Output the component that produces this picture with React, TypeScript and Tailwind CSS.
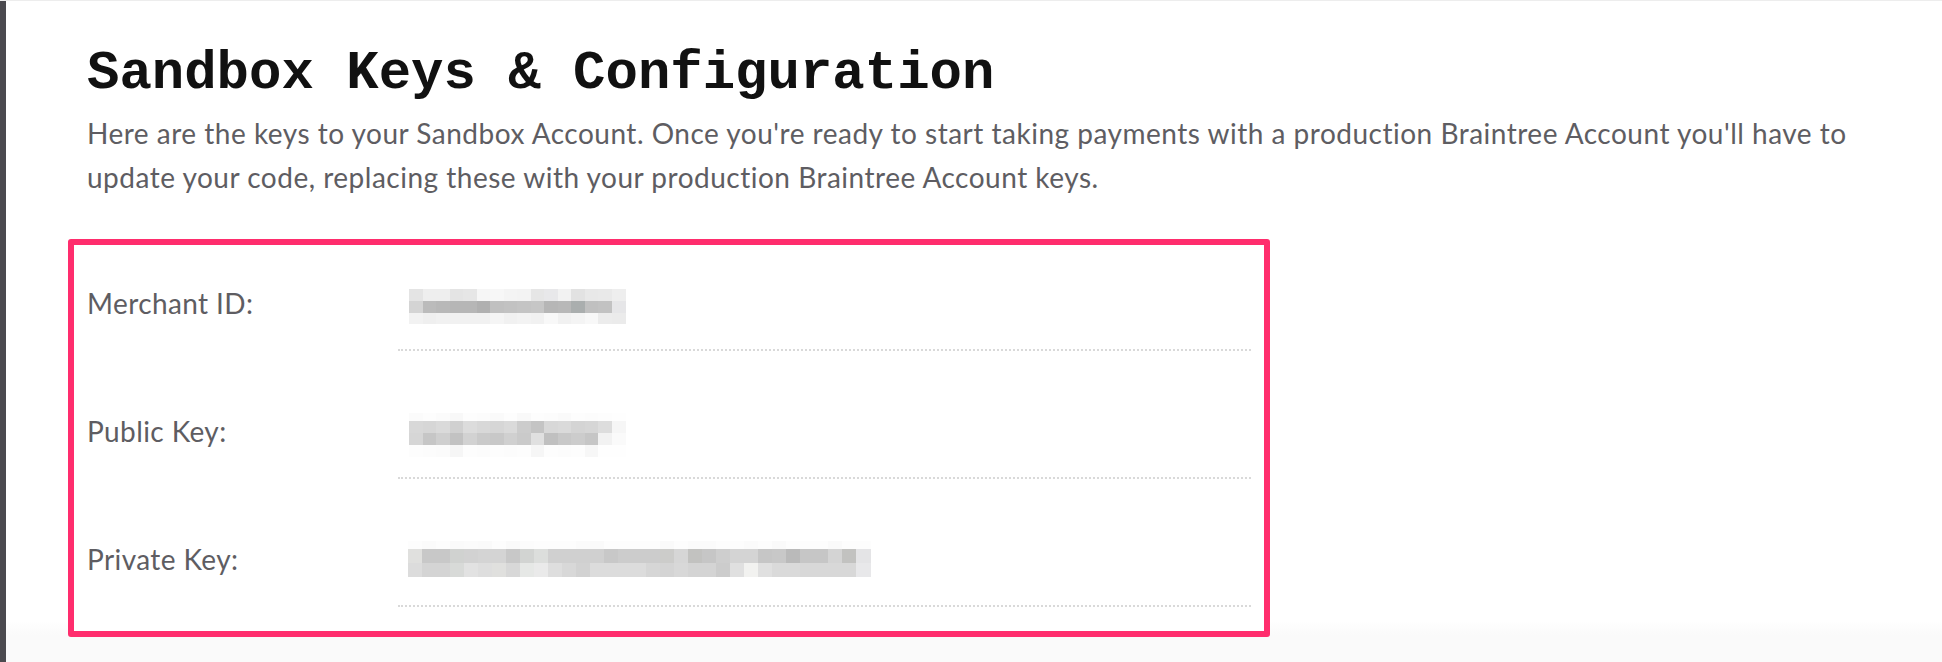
import React from "react";

type Blk = { x: number; y: number; w: number; h: number; c: string };

function rowBlocks(x0: number, y: number, w: number, h: number, colors: string[]): Blk[] {
  return colors.map((c, i) => ({ x: x0 + i * w, y, w, h, c }));
}

const merchant: Blk[] = [
  ...rowBlocks(11, 4, 13.5, 12, ["#e4e4e4", "#eeeeee", "#eeeeee", "#e4e4e4", "#e6e6e6", "#f6f6f6", "#f7f7f7", "#f4f4f4", "#f3f3f3", "#e6e6e6", "#e8e8ea", "#f2f2f2", "#e2e2e2", "#e8e8e8", "#e9e9e9", "#eeeeee"]),
  ...rowBlocks(11, 16, 13.5, 12, ["#d4d4d4", "#bbbbbb", "#b8b8b8", "#b6b6b6", "#b6b6b6", "#b0b0b0", "#c0c0c0", "#c2c2c2", "#c4c4c4", "#c6c6c6", "#b6b6b6", "#b8b8b8", "#aaaeae", "#c0c0c0", "#c2c2c2", "#e6e6e8"]),
  ...rowBlocks(11, 28, 13.5, 11, ["#f2f2f2", "#efefef", "#f1f1f1", "#f1f1f1", "#f1f1f1", "#f1f1f1", "#f5f5f5", "#f1f1f1", "#f3f3f3", "#f1f1f1", "#f8f8f8", "#f1f1f1", "#f4f4f4", "#f8f8f8", "#ececec", "#ebebeb"]),
];

const publicK: Blk[] = [
  ...rowBlocks(11, 0, 13.5, 8, ["#fbfbfb", "#fdfdfd", "#fbfbfb", "#f8f8f8", "#fdfdfd", "#fcfcfc", "#fafafa", "#fdfdfd", "#f9f9f9", "#fdfdfd", "#fcfcfc", "#fafafa", "#fdfdfd", "#fcfcfc", "#fdfdfd", "#fefefe"]),
  ...rowBlocks(11, 8, 13.5, 12, ["#d8d8d8", "#d6d6d6", "#dadada", "#d0d0d0", "#dcdcdc", "#d8d8d8", "#d6d6d6", "#dadada", "#cccccc", "#c4c4c4", "#d8d8d8", "#dadada", "#d4d4d4", "#d6d6d6", "#dddddd", "#f6f6f6"]),
  ...rowBlocks(11, 20, 13.5, 12, ["#d6d6d6", "#c6c6c6", "#cfcfcf", "#c2c2c2", "#d2d2d2", "#cacaca", "#c8c8c8", "#d0d0d0", "#cacaca", "#e0e0e0", "#c0c0c0", "#c8c8c8", "#cccccc", "#c6c6c6", "#f2f2f2", "#fafafa"]),
  ...rowBlocks(11, 32, 13.5, 12, ["#fdfdfd", "#fcfcfc", "#fbfbfb", "#f6f6f6", "#fdfdfd", "#fcfcfc", "#fdfdfd", "#fcfcfc", "#fdfdfd", "#f6f6f6", "#fdfdfd", "#fcfcfc", "#fdfdfd", "#f7f7f7", "#fefefe", "#fefefe"]),
];

const privateK: Blk[] = [
  ...rowBlocks(10, 0, 14, 8, ["#fdfdfd", "#fbfbfb", "#fdfdfd", "#fafafa", "#fbfbfb", "#fafafa", "#fdfdfd", "#fafafa", "#fcfcfc", "#fdfdfd", "#fdfdfd", "#fdfdfd", "#fbfbfb", "#fafafa", "#fdfdfd", "#fdfdfd", "#fdfdfd", "#fdfdfd", "#fafafa", "#fdfdfd", "#fbfbfb", "#fbfbfb", "#fdfdfd", "#fdfdfd", "#fbfbfb", "#fdfdfd", "#fafafa", "#fdfdfd", "#fdfdfd", "#fdfdfd", "#fafafa", "#fdfdfd", "#fdfdfd"]),
  ...rowBlocks(10, 8, 14, 14, ["#e0e0de", "#c8c8c8", "#c8c8c8", "#d0d2d0", "#d2d2d2", "#d4d4d4", "#d4d4d4", "#c8c8c8", "#d2d4d2", "#dcdedc", "#d0d0d0", "#d0d0d0", "#d0d0d0", "#d0d0d0", "#c8c8c8", "#cccccc", "#cccccc", "#cccccc", "#ccccca", "#d6d6d6", "#c2c2c0", "#c6c6c6", "#cecece", "#d4d4d4", "#d4d4d4", "#c6c6c6", "#c8c8c8", "#bababa", "#c6c6c6", "#c6c6c6", "#d4d4d4", "#c2c2c0", "#e4e4e6"]),
  ...rowBlocks(10, 22, 14, 14, ["#dcdcdc", "#d4d4d4", "#d4d4d4", "#d8dad8", "#e2e2e2", "#dedede", "#e0e0de", "#d8d8d8", "#e6e8e6", "#eaeaea", "#dedede", "#d8d8d8", "#d2d2d2", "#dcdcdc", "#dcdcdc", "#dcdcdc", "#dcdcdc", "#d6d6d6", "#d4d4d4", "#d8d8d8", "#d4d4d4", "#d4d4d4", "#cccccc", "#e0e0e0", "#f2f2f0", "#e0e0e0", "#dadada", "#dadada", "#d8d8d8", "#d8d8d8", "#d8d8d8", "#d8d8d8", "#e8e8ea"]),
];

function Blur({ blocks }: { blocks: Blk[] }) {
  return (
    <svg width="500" height="64" viewBox="0 0 500 64" className="block" shapeRendering="crispEdges">
      {blocks.map((b, i) => (
        <rect key={i} x={b.x} y={b.y} width={b.w + 0.5} height={b.h} fill={b.c} />
      ))}
    </svg>
  );
}

function Row({ label, blocks, first }: { label: string; blocks: Blk[]; first?: boolean }) {
  return (
    <div className={first ? "flex pt-[40px]" : "flex pt-[62px]"}>
      <div className="w-[311px] shrink-0 text-[28px] leading-[37px] tracking-[0.4px] text-[#5e5d62]">{label}</div>
      <div className="flex-1 border-b-2 border-dotted border-[#d9d9d9]">
        <Blur blocks={blocks} />
      </div>
    </div>
  );
}

export default function App() {
  return (
    <div className="flex h-[662px] w-[1942px] overflow-hidden border-t border-[#ededed] bg-[linear-gradient(to_bottom,#ffffff_620px,#fafafa_634px)] font-['Lato',sans-serif]">
      <div className="w-[6px] shrink-0 bg-[#4b4a4f]" />
      <div className="flex flex-1 flex-col pl-[62px] pt-[43px]">
        <h1 className="pl-[19px] font-['Liberation_Mono',monospace] text-[54px] font-bold leading-[60px] text-[#111111]">
          Sandbox Keys &amp; Configuration
        </h1>
        <p className="mt-[7px] w-[1825px] pl-[19px] text-[28px] leading-[44px] tracking-[0.5px] text-[#5e5d62]">
          Here are the keys to your Sandbox Account. Once you're ready to start taking payments with a production Braintree Account you'll have to update your code, replacing these with your production Braintree Account keys.
        </p>
        <div className="mt-[40px] w-[1202px] rounded-[3px] border-[6px] border-[#ff2d6d] bg-white px-[13px] pb-[24px]">
          <Row label="Merchant ID:" blocks={merchant} first />
          <Row label="Public Key:" blocks={publicK} />
          <Row label="Private Key:" blocks={privateK} />
        </div>
      </div>
    </div>
  );
}
